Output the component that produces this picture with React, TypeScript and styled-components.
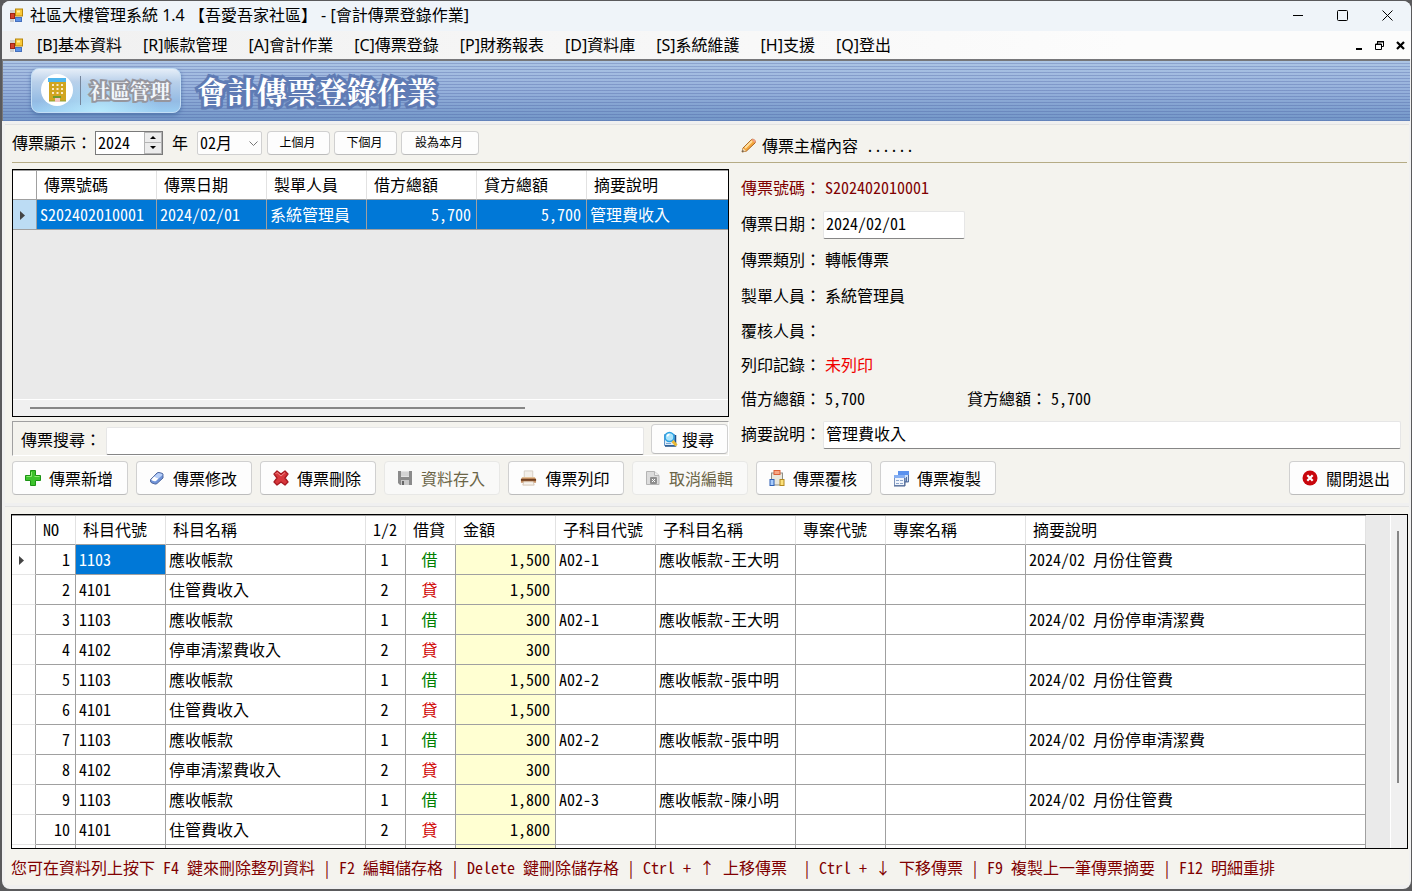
import React from 'react';
import styled, { createGlobalStyle } from 'styled-components';

const uiFont = '"Noto Sans", "Noto Sans CJK TC", sans-serif';
const monoFont = '"Noto Sans Mono CJK TC", "Liberation Mono", "Noto Sans CJK TC", monospace';
const bannerFont = '"Noto Serif CJK TC", "Noto Sans CJK TC", serif';

const GlobalStyle = createGlobalStyle`
  *, *::before, *::after { box-sizing: border-box; }
  body { margin: 0; background: #5a5a5c; }
  button, input, select { font: inherit; color: inherit; margin: 0; }
`;

const Window = styled.div`
  height: 100vh;
  display: flex;
  flex-direction: column;
  padding: 1px 1px 2px 2px;
  font: 400 16px/20px ${monoFont};
  color: #000;
`;

const Frame = styled.div`
  flex: 1;
  min-height: 0;
  display: flex;
  flex-direction: column;
  background: #f0f0f0;
  border-radius: 8px;
  overflow: hidden;
`;

const TitleBar = styled.header`
  height: 30px;
  flex: none;
  display: flex;
  align-items: center;
  padding: 0 1px 2px 7px;
  gap: 6px;
  background: #eff4f9;
  font: 400 16px/20px ${uiFont};
  white-space: pre;
`;

const Title = styled.h1`
  flex: 1;
  margin: 0;
  font: inherit;
`;

const CaptionButton = styled.button<{ $w: number }>`
  width: ${p => p.$w}px;
  height: 20px;
  display: flex;
  align-items: center;
  justify-content: center;
  padding: 0;
  border: 0;
  background: none;
`;

const MenuBar = styled.nav`
  height: 28px;
  flex: none;
  display: flex;
  align-items: center;
  padding: 0 1px 0 7px;
  background: linear-gradient(90deg, #f0f0f0, #fcfcfc 80%);
  font: 400 16px/20px ${uiFont};
`;

const MenuItems = styled.div`
  flex: 1;
  display: flex;
  gap: 21px;
  padding-left: 13px;
`;

const MenuLink = styled.a`
  color: #000;
  text-decoration: none;
  white-space: nowrap;
`;

const Banner = styled.div`
  height: 62px;
  flex: none;
  display: flex;
  align-items: center;
  gap: 16px;
  padding: 0 0 2px 28px;
  margin-right: 1px;
  border-top: 2px solid #77777a;
  border-left: 1px solid #77777a;
  background:
    repeating-linear-gradient(180deg, rgba(60, 80, 150, 0) 0 2px, rgba(60, 80, 150, 0.28) 2px 3px),
    linear-gradient(180deg, #adc5e5, #95b0db 50%, #7397c8);
`;

const Logo = styled.div`
  width: 150px;
  height: 45px;
  display: flex;
  align-items: center;
  gap: 7px;
  padding-left: 9px;
  border-radius: 8px;
  border: 1px solid #c3def5;
  background:
    radial-gradient(ellipse at 45% 100%, rgba(190, 240, 255, 0.8), rgba(190, 240, 255, 0) 55%),
    linear-gradient(180deg, #e6eef8 0, #b9d0ea 30%, #94bbe4 75%, #9bcdf2);
  box-shadow: 0 2px 4px #4f75ab;
`;

const LogoText = styled.span`
  padding-left: 9px;
  border-left: 1px solid #75859b;
  font: 700 20px/29px ${bannerFont};
  color: #f2f7fc;
  -webkit-text-stroke: 4px #96969e;
  paint-order: stroke fill;
  white-space: nowrap;
`;

const BannerTitle = styled.h2`
  margin: 0;
  font: 700 30px/40px ${bannerFont};
  color: #fff;
  -webkit-text-stroke: 6px #5f7bb4;
  paint-order: stroke fill;
  white-space: nowrap;
`;

const Panel = styled.section`
  flex: none;
  margin: 3px 2px 0 3px;
  padding: 0 2px 8px 7px;
  background: #f4f3ee;
  border-top: 1px solid #e2e2e2;
`;

const TwoColumns = styled.div`
  display: grid;
  grid-template-columns: 717px 1fr;
  column-gap: 12px;
`;

const FilterRow = styled(TwoColumns)`
  height: 38px;
  border-bottom: 1px solid #b5ab85;
`;

const Filters = styled.div`
  display: flex;
  align-items: center;
  padding-bottom: 2px;
`;

const FilterLabel = styled.label`
  width: 83px;
  padding-bottom: 2px;
  white-space: nowrap;
`;

const SpinBox = styled.span`
  width: 68px;
  height: 24px;
  display: flex;
  border: 1px solid #7a7a7a;
  background: #fff;
`;

const SpinInput = styled.input`
  flex: 1;
  min-width: 0;
  padding: 0 0 2px 2px;
  border: 0;
  background: none;
`;

const SpinButtons = styled.span`
  width: 18px;
  display: grid;
  gap: 1px;
  padding: 1px;
  background: #b4b4b4;
`;

const SpinButton = styled.button`
  display: flex;
  align-items: center;
  justify-content: center;
  min-height: 0;
  padding: 0;
  border: 0;
  background: #ececec;
`;

const YearUnit = styled.span`
  width: 34px;
  padding-bottom: 2px;
  text-align: center;
`;

const SelectBox = styled.span`
  position: relative;
  width: 65px;
  margin-right: 5px;
`;

const MonthSelect = styled.select`
  width: 100%;
  height: 24px;
  display: block;
  appearance: none;
  padding: 0 0 2px 2px;
  border: 1px solid #d0d0d0;
  border-radius: 2px;
  background: #fdfdfd;
`;

const SelectArrow = styled.svg`
  position: absolute;
  right: 4px;
  top: 10px;
  pointer-events: none;
`;

const PushButton = styled.button<{ $w: number }>`
  width: ${p => p.$w}px;
  height: 24px;
  flex: none;
  margin-right: 4px;
  padding: 0 2px 2px 0;
  font-size: 12px;
  border: 1px solid #d0d0d0;
  border-bottom-color: #bcbcbc;
  border-radius: 4px;
  background: #fdfdfd;
  white-space: nowrap;
`;

const DetailHeading = styled.h3`
  display: flex;
  align-items: center;
  gap: 5px;
  margin: 3px 0 0;
  font: inherit;
  white-space: pre;
`;

const Body = styled(TwoColumns)`
  padding-top: 6px;
`;

const VoucherBox = styled.div`
  height: 248px;
  display: flex;
  flex-direction: column;
  border: 1px solid #000;
  background: #eaeaea;
  overflow: hidden;
`;

const VoucherScroll = styled.div`
  flex: 1;
  min-height: 0;
  overflow: hidden;
`;

const Grid = styled.table<{ $w: string }>`
  width: ${p => p.$w};
  table-layout: fixed;
  border-collapse: separate;
  border-spacing: 0;
  border-top: 1px solid #a0a0a0;
`;

const HeadCell = styled.th`
  height: 29px;
  padding: 0 0 2px 7px;
  text-align: left;
  font-weight: inherit;
  white-space: nowrap;
  background: #fff;
  border-right: 1px solid #e2e2e2;
  border-bottom: 1px solid #a0a0a0;

  &:first-child { border-right-color: #a0a0a0; }
`;

type CellTone = 'plain' | 'selected' | 'amount' | 'rowHead' | 'rowHeadActive';

const toneBackground: Record<CellTone, string> = {
  plain: '#fff',
  selected: '#0078d7',
  amount: '#ffffd2',
  rowHead: '#fff',
  rowHeadActive: '#bcdcf4',
};

const Cell = styled.td<{ $tone?: CellTone; $align?: 'left' | 'center' | 'right'; $color?: string }>`
  height: 30px;
  padding: 0 ${p => (p.$align === 'right' ? 5 : 2)}px 2px ${p => (p.$align === 'center' ? 0 : 3)}px;
  text-align: ${p => p.$align ?? 'left'};
  color: ${p => p.$color ?? (p.$tone === 'selected' ? '#fff' : '#000')};
  background: ${p => toneBackground[p.$tone ?? 'plain']};
  white-space: pre;
  overflow: hidden;
  border-right: 1px solid #a0a0a0;
  border-bottom: 1px solid ${p => (p.$tone === 'rowHead' ? '#e5e5e5' : '#a0a0a0')};
`;

const HScrollbar = styled.div`
  height: 17px;
  flex: none;
  padding: 7px 0 0 17px;
  background: #f0f0f0;
  border-top: 1px solid #fff;
`;

const HThumb = styled.div`
  width: 495px;
  height: 2px;
  background: #868686;
`;

const SearchRow = styled.form`
  height: 35px;
  display: flex;
  align-items: center;
  margin-top: 4px;
  padding-left: 8px;
  border: 1px solid #a0a0a0;
  border-right-color: #fff;
  border-bottom-color: #fff;
`;

const SearchLabel = styled.label`
  width: 85px;
  white-space: nowrap;
`;

const TextInput = styled.input<{ $w?: number }>`
  ${p => (p.$w ? `width: ${p.$w}px;` : 'flex: 1; min-width: 0;')}
  height: 28px;
  margin-top: 4px;
  padding: 0 2px 4px;
  border: 1px solid #e6e6e6;
  border-bottom-color: #868686;
  border-radius: 2px;
  background: #fff;
`;

const ToolButton = styled.button<{ $w: number; $h: number }>`
  width: ${p => p.$w}px;
  height: ${p => p.$h}px;
  flex: none;
  display: flex;
  align-items: center;
  justify-content: center;
  gap: 8px;
  padding: 0 2px 0 0;
  border: 1px solid #d0d0d0;
  border-bottom-color: #bcbcbc;
  border-radius: 4px;
  background: #fdfdfd;
  white-space: nowrap;

  &:disabled {
    color: #6b6547;
    background: #f9f9f8;
    border-color: #e8e8e6;
  }
`;

const SearchButton = styled(ToolButton)`
  margin-left: 7px;
  gap: 4px;
`;

const Fields = styled.div`
  display: grid;
  grid-template-rows: 36px 36px 36px 36px 34px 34px 34px 36px;
  padding-right: 6px;
`;

const Field = styled.div<{ $color?: string }>`
  display: flex;
  align-items: center;
  color: ${p => p.$color ?? '#000'};
`;

const FieldLabel = styled.label`
  width: 82px;
  flex: none;
  white-space: nowrap;
`;

const FieldValue = styled.output<{ $w?: number; $color?: string }>`
  width: ${p => (p.$w ? `${p.$w}px` : 'auto')};
  padding-left: 2px;
  color: ${p => p.$color ?? 'inherit'};
`;

const Toolbar = styled.div`
  display: flex;
  gap: 8px;
  margin: 5px 2px 0 0;
`;

const Spacer = styled.span`
  flex: 1;
`;

const EntryPanel = styled.section`
  flex: 1;
  min-height: 0;
  display: flex;
  flex-direction: column;
  margin: 3px 2px 4px 3px;
  padding: 7px 1px 0 6px;
  background: #f4f3ee;
  border-top: 1px solid #e2e2e2;
`;

const EntryBox = styled.div`
  flex: 1;
  min-height: 0;
  display: flex;
  border: 1px solid #000;
  background: #eaeaea;
`;

const EntryScroll = styled.div`
  flex: 1;
  min-width: 0;
  overflow: hidden;
`;

const VScrollbar = styled.div`
  width: 17px;
  padding: 16px 0 0 6px;
  background: #f0f0f0;
  border-left: 1px solid #fff;
`;

const VThumb = styled.div`
  width: 2px;
  height: 252px;
  background: #868686;
`;

const Hint = styled.p`
  flex: none;
  height: 36px;
  margin: 0;
  line-height: 36px;
  color: #800000;
  white-space: pre;
  overflow: hidden;
`;

const AppIcon = () => (
  <svg width="15" height="15" viewBox="0 0 15 15" aria-hidden="true">
    <path d="M1 2h5v3H1zM1 11h4v3H1z" fill="#cfcfcf" />
    <rect x="6.500" y="1" width="7" height="7" fill="#f9c838" stroke="#b8860b" />
    <rect x="8" y="2.500" width="3" height="2" fill="#fff0a8" />
    <rect x="1.500" y="5.500" width="4" height="5" fill="#d5402b" stroke="#a02412" />
    <rect x="6.500" y="9.500" width="6" height="4" fill="#5e93e6" stroke="#4570bd" />
  </svg>
);

const RowMarker = () => (
  <svg width="16" height="11" viewBox="0 0 16 11" aria-label="目前資料列">
    <path d="M4 1v9l5-4.500z" fill="#444" />
  </svg>
);

const BuildingIcon = () => (
  <svg width="32" height="32" viewBox="0 0 32 32" aria-hidden="true">
    <circle cx="16" cy="16" r="16" fill="#fff" />
    <path d="M8 8h17v19H8z" fill="#d0a520" />
    <path d="M7 4h18v4H7z" fill="#52b6ec" />
    <path d="M11 10h2v2h-2zM15.500 10h2v2h-2zM20 10h2v2h-2zM11 14h2v2h-2zM15.500 14h2v2h-2zM20 14h2v2h-2zM11 18h2v2h-2zM15.500 18h2v2h-2zM20 18h2v2h-2z" fill="#fbe9c8" />
    <path d="M12 22h8v2h-8z" fill="#6b9b32" />
    <path d="M14 24h5v4h-5z" fill="#f5c6c4" />
    <path d="M8 27h6M19 27h6" stroke="#8aa13a" />
  </svg>
);

const PencilIcon = () => (
  <svg width="16" height="16" viewBox="0 0 16 16" aria-hidden="true">
    <path d="M2 11 10.500 2.500q1.500-1 3 .5t.5 3L5.500 14 1 15z" fill="#f5a63c" stroke="#a8641f" />
    <path d="m4 11 7-7" stroke="#ffe0a0" strokeWidth="2" />
    <path d="m10.500 2.500 3.500 3.500q1.500-1.500 0-3t-3.500-.5z" fill="#ef9d88" />
    <path d="m2 11 3 3-4 1z" fill="#f4deb8" /><path d="m1 15 .7-2 1.300 1.300z" fill="#333" />
  </svg>
);

const SearchIcon = () => (
  <svg width="15" height="16" viewBox="0 0 15 16" aria-hidden="true">
    <path d="M1.500 3.500h10v11h-10z" fill="#dcebf8" stroke="#5d97cd" />
    <path d="M12.500 4v11H2" stroke="#1f4f86" fill="none" strokeWidth="1.500" />
    <path d="M3 12.500h5" stroke="#7aa5cf" />
    <circle cx="6.500" cy="6" r="4.500" fill="#a9e3fb" stroke="#2ba0e2" strokeWidth="1.500" />
    <path d="M4.500 5.500q0-2 2-2" stroke="#fff" strokeWidth="1.500" fill="none" />
    <path d="m9.500 10 4 4.500" stroke="#eab832" strokeWidth="2.800" />
  </svg>
);

const AddIcon = () => (
  <svg width="16" height="16" viewBox="0 0 16 16" aria-hidden="true">
    <path d="M5.500.5h5v5h5v5h-5v5h-5v-5h-5v-5h5z" fill="#3cc32c" stroke="#1c9314" />
    <path d="M6.500 2v4.500h-5M9.500 6.500h5" stroke="#8cea72" fill="none" />
  </svg>
);

const EraserIcon = () => (
  <svg width="16" height="16" viewBox="0 0 16 16" aria-hidden="true">
    <path d="M1.500 9.500 8 3q.8-.6 2-.5l3 .8q1.500.5 1 2V8L8 13.500q-1 .8-2 .5L3 13q-1.500-.5-1.500-2z" fill="#6f93d8" stroke="#51699f" />
    <path d="m5 6.500 3.500-3q.8-.6 2-.3l2.500.8q1 .5 0 1.500L9.500 8.500z" fill="#b8d0fa" />
    <path d="m2.300 9.500 2.700-3 4.500 2L7 11q-.8.500-1.500.3L3 10.500z" fill="#fff" />
  </svg>
);

const DeleteIcon = () => (
  <svg width="16" height="16" viewBox="0 0 16 16" aria-hidden="true">
    <path d="M1 4 4 1l4 3L12 1l3 3-3 4 3 4-3 3-4-3-4 3-3-3 3-4z" fill="#d7373c" stroke="#a71921" strokeWidth="1.300" strokeLinejoin="round" />
    <path d="m2.500 4 1.500-1.500L8 6l4-3.500" stroke="#f08a88" fill="none" />
  </svg>
);

const SaveIcon = () => (
  <svg width="16" height="16" viewBox="0 0 16 16" aria-hidden="true">
    <path d="M1 1h14v14H3l-2-2z" fill="#8b8b8b" />
    <path d="M4 1h8v6H4z" fill="#e4e4e4" /><path d="M4 10h8v5H4z" fill="#c8c8c8" />
    <path d="M5 11h2v4H5z" fill="#666" /><path d="M4 3h8M4 5h8" stroke="#c4c4c4" />
  </svg>
);

const PrintIcon = () => (
  <svg width="17" height="16" viewBox="0 0 18 16" aria-hidden="true">
    <path d="M4.500.5h9v8h-9z" fill="#f3efe9" stroke="#d5cdc3" />
    <path d="M3 7h12l2 2v4H1V9z" fill="#c49064" /><path d="M1 9h16v2H1z" fill="#714121" />
    <path d="M2 7.500h14" stroke="#e4c39c" />
    <path d="M4 12h10l1 3.500H3z" fill="#f8f4ee" stroke="#d3c4b2" />
  </svg>
);

const CancelEditIcon = () => (
  <svg width="16" height="16" viewBox="0 0 16 16" aria-hidden="true">
    <path d="M1.500 1.500h8l4.500 4v9h-12.500z" fill="#dcdcdc" stroke="#b4b4b4" />
    <path d="M9.500 1.500v4h4.500" fill="#eee" stroke="#b4b4b4" />
    <rect x="5" y="7" width="7" height="7" rx="1" fill="#8e8e8e" />
    <path d="m7 9 3 3m0-3-3 3" stroke="#fff" />
  </svg>
);

const ReviewIcon = () => (
  <svg width="16" height="18" viewBox="0 0 16 18" aria-hidden="true">
    <rect x="2.500" y="4" width="11" height="12" fill="#e9e7dc" stroke="#8e8f88" />
    <rect x="5" y="1.500" width="6" height="4" fill="#f7a582" stroke="#dc6036" />
    <rect x="1" y="10.500" width="4" height="6" fill="#a8ccfc" stroke="#2d5fb5" />
    <rect x="11" y="10.500" width="4" height="6" fill="#fce17a" stroke="#b3881e" />
  </svg>
);

const CopyIcon = () => (
  <svg width="16" height="17" viewBox="0 0 16 17" aria-hidden="true">
    <rect x="5.500" y="1.500" width="10" height="10" fill="#cfe0f8" stroke="#86a5da" />
    <path d="M5 1h11v4H5z" fill="#5b92ee" />
    <path d="M13.500 7v5M15.500 5v7h-4" stroke="#56719f" fill="none" />
    <rect x="1.500" y="5.500" width="10" height="10" fill="#f1f5fc" stroke="#7c93bb" />
    <path d="M1 5h11v3H1z" fill="#86aff2" />
    <path d="M3 10.500h3m1 0h3m-7 3h3m1 0h3" stroke="#8da5ca" />
    <path d="M1 16h11V8" stroke="#4a6390" fill="none" />
  </svg>
);

const ExitIcon = () => (
  <svg width="16" height="16" viewBox="0 0 16 16" aria-hidden="true">
    <circle cx="8" cy="8" r="7.500" fill="#c8060c" />
    <path d="m5.300 5.300 5.400 5.400m0-5.400-5.400 5.400" stroke="#fff" strokeWidth="2.200" />
  </svg>
);

const menuItems = ['[B]基本資料', '[R]帳款管理', '[A]會計作業', '[C]傳票登錄', '[P]財務報表', '[D]資料庫', '[S]系統維護', '[H]支援', '[Q]登出'];

const tools = [
  { label: '傳票新增', Icon: AddIcon, disabled: false },
  { label: '傳票修改', Icon: EraserIcon, disabled: false },
  { label: '傳票刪除', Icon: DeleteIcon, disabled: false },
  { label: '資料存入', Icon: SaveIcon, disabled: true },
  { label: '傳票列印', Icon: PrintIcon, disabled: false },
  { label: '取消編輯', Icon: CancelEditIcon, disabled: true },
  { label: '傳票覆核', Icon: ReviewIcon, disabled: false },
  { label: '傳票複製', Icon: CopyIcon, disabled: false },
];

const voucherColumns = [
  { name: '', width: 24 },
  { name: '傳票號碼', width: 120 },
  { name: '傳票日期', width: 110 },
  { name: '製單人員', width: 100 },
  { name: '借方總額', width: 110 },
  { name: '貸方總額', width: 110 },
  { name: '摘要說明', width: 300 },
];

const entryColumns = [
  { name: '', width: 24 },
  { name: 'NO', width: 40 },
  { name: '科目代號', width: 90 },
  { name: '科目名稱', width: 200 },
  { name: '1/2', width: 40 },
  { name: '借貸', width: 50 },
  { name: '金額', width: 100 },
  { name: '子科目代號', width: 100 },
  { name: '子科目名稱', width: 140 },
  { name: '專案代號', width: 90 },
  { name: '專案名稱', width: 140 },
  { name: '摘要說明', width: 340 },
];

const entries = [
  ['1103', '應收帳款', '1,500', 'A02-1', '應收帳款-王大明', '2024/02 月份住管費'],
  ['4101', '住管費收入', '1,500', '', '', ''],
  ['1103', '應收帳款', '300', 'A02-1', '應收帳款-王大明', '2024/02 月份停車清潔費'],
  ['4102', '停車清潔費收入', '300', '', '', ''],
  ['1103', '應收帳款', '1,500', 'A02-2', '應收帳款-張中明', '2024/02 月份住管費'],
  ['4101', '住管費收入', '1,500', '', '', ''],
  ['1103', '應收帳款', '300', 'A02-2', '應收帳款-張中明', '2024/02 月份停車清潔費'],
  ['4102', '停車清潔費收入', '300', '', '', ''],
  ['1103', '應收帳款', '1,800', 'A02-3', '應收帳款-陳小明', '2024/02 月份住管費'],
  ['4101', '住管費收入', '1,800', '', '', ''],
  ['', '', '', '', '', ''],
];

const Columns = ({ columns }: { columns: { name: string; width: number }[] }) => (
  <>
    <colgroup>
      {columns.map(c => <col key={c.name} style={{ width: c.width }} />)}
    </colgroup>
    <thead>
      <tr>{columns.map(c => <HeadCell key={c.name} scope="col">{c.name}</HeadCell>)}</tr>
    </thead>
  </>
);

export default function App() {
  return (
    <Window>
      <GlobalStyle />
      <Frame>
        <TitleBar>
          <AppIcon />
          <Title>社區大樓管理系統 1.4 【吾愛吾家社區】 - [會計傳票登錄作業]</Title>
          <CaptionButton $w={45} aria-label="最小化">
            <svg width="10" height="10"><path d="M0 5.500h10" stroke="#000" /></svg>
          </CaptionButton>
          <CaptionButton $w={33} aria-label="最大化">
            <svg width="11" height="11"><rect x="0.500" y="0.500" width="10" height="10" rx="1" fill="none" stroke="#000" /></svg>
          </CaptionButton>
          <CaptionButton $w={45} aria-label="關閉">
            <svg width="11" height="11"><path d="m.5.5 10 10m0-10-10 10" stroke="#000" /></svg>
          </CaptionButton>
        </TitleBar>

        <MenuBar>
          <AppIcon />
          <MenuItems>
            {menuItems.map(m => <MenuLink key={m} href="#">{m}</MenuLink>)}
          </MenuItems>
          <CaptionButton $w={20} aria-label="最小化子視窗">
            <svg width="8" height="10"><path d="M1 9h6" stroke="#000" strokeWidth="2" /></svg>
          </CaptionButton>
          <CaptionButton $w={21} aria-label="還原子視窗">
            <svg width="10" height="9" fill="none" stroke="#000"><path d="M2.500 3V1h6v4.500H7M2 .5h7M.5 3v5.500h6V3zM0 3.500h7" /></svg>
          </CaptionButton>
          <CaptionButton $w={20} aria-label="關閉子視窗">
            <svg width="9" height="9"><path d="m1 1 7 7m0-7L1 8" stroke="#000" strokeWidth="2.200" /></svg>
          </CaptionButton>
        </MenuBar>

        <Banner>
          <Logo>
            <BuildingIcon />
            <LogoText>社區管理</LogoText>
          </Logo>
          <BannerTitle>會計傳票登錄作業</BannerTitle>
        </Banner>

        <Panel>
          <FilterRow>
            <Filters>
              <FilterLabel htmlFor="year">傳票顯示：</FilterLabel>
              <SpinBox>
                <SpinInput id="year" defaultValue="2024" />
                <SpinButtons>
                  <SpinButton aria-label="增加年份"><svg width="6" height="3"><path d="M0 3h6L3 0z" /></svg></SpinButton>
                  <SpinButton aria-label="減少年份"><svg width="6" height="3"><path d="M0 0h6L3 3z" /></svg></SpinButton>
                </SpinButtons>
              </SpinBox>
              <YearUnit>年</YearUnit>
              <SelectBox>
                <MonthSelect aria-label="月份" defaultValue="02月">
                  <option>02月</option>
                </MonthSelect>
                <SelectArrow width="9" height="6" fill="none" stroke="#777"><path d="m.5.5 4 4 4-4" /></SelectArrow>
              </SelectBox>
              <PushButton $w={63}>上個月</PushButton>
              <PushButton $w={63}>下個月</PushButton>
              <PushButton $w={78}>設為本月</PushButton>
            </Filters>
            <DetailHeading><PencilIcon />傳票主檔內容 ......</DetailHeading>
          </FilterRow>

          <Body>
            <div>
              <VoucherBox>
                <VoucherScroll>
                  <Grid $w="874px">
                    <Columns columns={voucherColumns} />
                    <tbody>
                      <tr>
                        <Cell $tone="rowHeadActive" $align="center"><RowMarker /></Cell>
                        <Cell $tone="selected">S202402010001</Cell>
                        <Cell $tone="selected">2024/02/01</Cell>
                        <Cell $tone="selected">系統管理員</Cell>
                        <Cell $tone="selected" $align="right">5,700</Cell>
                        <Cell $tone="selected" $align="right">5,700</Cell>
                        <Cell $tone="selected">管理費收入</Cell>
                      </tr>
                    </tbody>
                  </Grid>
                </VoucherScroll>
                <HScrollbar><HThumb /></HScrollbar>
              </VoucherBox>
              <SearchRow>
                <SearchLabel htmlFor="search">傳票搜尋：</SearchLabel>
                <TextInput id="search" />
                <SearchButton type="button" $w={77} $h={30}><SearchIcon />搜尋</SearchButton>
              </SearchRow>
            </div>

            <Fields>
              <Field $color="#800000">
                <FieldLabel htmlFor="number">傳票號碼：</FieldLabel>
                <FieldValue id="number">S202402010001</FieldValue>
              </Field>
              <Field>
                <FieldLabel htmlFor="date">傳票日期：</FieldLabel>
                <TextInput id="date" $w={142} defaultValue="2024/02/01" />
              </Field>
              <Field>
                <FieldLabel htmlFor="kind">傳票類別：</FieldLabel>
                <FieldValue id="kind">轉帳傳票</FieldValue>
              </Field>
              <Field>
                <FieldLabel htmlFor="maker">製單人員：</FieldLabel>
                <FieldValue id="maker">系統管理員</FieldValue>
              </Field>
              <Field>
                <FieldLabel htmlFor="reviewer">覆核人員：</FieldLabel>
                <FieldValue id="reviewer" />
              </Field>
              <Field>
                <FieldLabel htmlFor="printed">列印記錄：</FieldLabel>
                <FieldValue id="printed" $color="#f00000">未列印</FieldValue>
              </Field>
              <Field>
                <FieldLabel htmlFor="debit">借方總額：</FieldLabel>
                <FieldValue id="debit" $w={144}>5,700</FieldValue>
                <FieldLabel htmlFor="credit">貸方總額：</FieldLabel>
                <FieldValue id="credit">5,700</FieldValue>
              </Field>
              <Field>
                <FieldLabel htmlFor="summary">摘要說明：</FieldLabel>
                <TextInput id="summary" defaultValue="管理費收入" />
              </Field>
            </Fields>
          </Body>

          <Toolbar>
            {tools.map(({ label, Icon, disabled }) => (
              <ToolButton key={label} $w={116} $h={34} disabled={disabled}><Icon />{label}</ToolButton>
            ))}
            <Spacer />
            <ToolButton $w={116} $h={34}><ExitIcon />關閉退出</ToolButton>
          </Toolbar>
        </Panel>

        <EntryPanel>
          <EntryBox>
            <EntryScroll>
              <Grid $w="1354px">
                <Columns columns={entryColumns} />
                <tbody>
                  {entries.map(([code, name, amount, subCode, subName, note], i) => {
                    const debit = i % 2 === 0;
                    return (
                      <tr key={i}>
                        <Cell $tone="rowHead" $align="center">{i === 0 && <RowMarker />}</Cell>
                        <Cell $align="right">{code && i + 1}</Cell>
                        <Cell $tone={i === 0 ? 'selected' : 'plain'}>{code}</Cell>
                        <Cell>{name}</Cell>
                        <Cell $align="center">{code && (debit ? '1' : '2')}</Cell>
                        <Cell $align="center" $color={debit ? '#008000' : '#d00000'}>{code && (debit ? '借' : '貸')}</Cell>
                        <Cell $tone="amount" $align="right">{amount}</Cell>
                        <Cell>{subCode}</Cell>
                        <Cell>{subName}</Cell>
                        <Cell />
                        <Cell />
                        <Cell>{note}</Cell>
                      </tr>
                    );
                  })}
                </tbody>
              </Grid>
            </EntryScroll>
            <VScrollbar><VThumb /></VScrollbar>
          </EntryBox>
          <Hint>您可在資料列上按下 F4 鍵來刪除整列資料 | F2 編輯儲存格 | Delete 鍵刪除儲存格 | Ctrl + ↑ 上移傳票  | Ctrl + ↓ 下移傳票 | F9 複製上一筆傳票摘要 | F12 明細重排</Hint>
        </EntryPanel>
      </Frame>
    </Window>
  );
}
